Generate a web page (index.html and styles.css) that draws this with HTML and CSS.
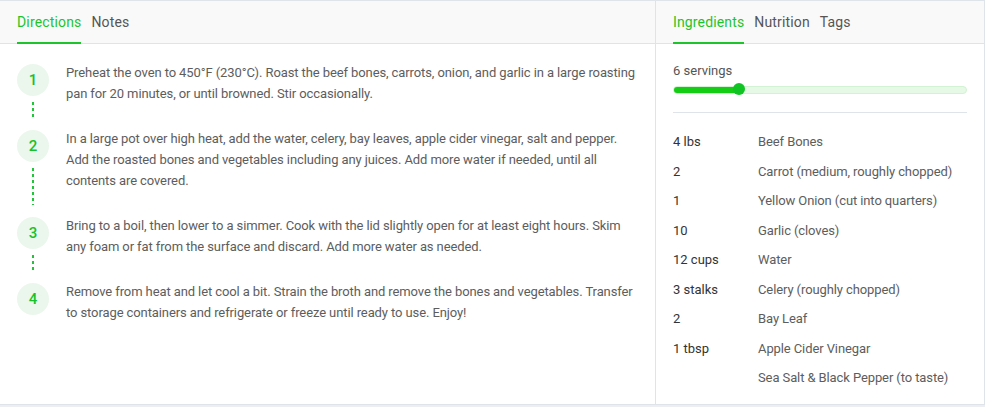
FILE: index.html
```html
<!DOCTYPE html>
<html>
<head>
<meta charset="utf-8">
<link rel="stylesheet" href="styles.css">
</head>
<body>
<div class="card">
  <section class="panel left">
    <nav class="tabs">
      <span class="tab active">Directions</span>
      <span class="tab">Notes</span>
    </nav>
    <div class="steps">
      <div class="step">
        <div class="rail"><span class="num">1</span><span class="dots"></span></div>
        <p class="text">Preheat the oven to 450°F (230°C). Roast the beef bones, carrots, onion, and garlic in a large roasting pan for 20 minutes, or until browned. Stir occasionally.</p>
      </div>
      <div class="step">
        <div class="rail"><span class="num">2</span><span class="dots"></span></div>
        <p class="text">In a large pot over high heat, add the water, celery, bay leaves, apple cider vinegar, salt and pepper. Add the roasted bones and vegetables including any juices. Add more water if needed, until all contents are covered.</p>
      </div>
      <div class="step">
        <div class="rail"><span class="num">3</span><span class="dots"></span></div>
        <p class="text">Bring to a boil, then lower to a simmer. Cook with the lid slightly open for at least eight hours. Skim any foam or fat from the surface and discard. Add more water as needed.</p>
      </div>
      <div class="step last">
        <div class="rail"><span class="num">4</span></div>
        <p class="text">Remove from heat and let cool a bit. Strain the broth and remove the bones and vegetables. Transfer to storage containers and refrigerate or freeze until ready to use. Enjoy!</p>
      </div>
    </div>
  </section>
  <section class="panel right">
    <nav class="tabs">
      <span class="tab active">Ingredients</span>
      <span class="tab">Nutrition</span>
      <span class="tab">Tags</span>
    </nav>
    <div class="ingredients">
      <div class="servings">6 servings</div>
      <div class="slider"><div class="fill" style="width:65px"></div><span class="thumb" style="left:65px"></span></div>
      <div class="divider"></div>
      <ul class="list">
        <li><span class="qty">4 lbs</span><span class="name">Beef Bones</span></li>
        <li><span class="qty">2</span><span class="name">Carrot (medium, roughly chopped)</span></li>
        <li><span class="qty">1</span><span class="name">Yellow Onion (cut into quarters)</span></li>
        <li><span class="qty">10</span><span class="name">Garlic (cloves)</span></li>
        <li><span class="qty">12 cups</span><span class="name">Water</span></li>
        <li><span class="qty">3 stalks</span><span class="name">Celery (roughly chopped)</span></li>
        <li><span class="qty">2</span><span class="name">Bay Leaf</span></li>
        <li><span class="qty">1 tbsp</span><span class="name">Apple Cider Vinegar</span></li>
        <li><span class="qty"></span><span class="name">Sea Salt &amp; Black Pepper (to taste)</span></li>
      </ul>
    </div>
  </section>
</div>
</body>
</html>
```
FILE: styles.css
```css
* { box-sizing: border-box; }
body {
  margin: 0;
  background: #eceef1;
  font-family: Roboto, "Noto Sans", sans-serif;
  -webkit-font-smoothing: antialiased;
}
.card {
  display: flex;
  width: 985px;
  height: 405px;
  background: #fff;
  border-top: 1px solid #dfe4ea;
  border-right: 1px solid #dfe4ea;
  border-bottom: 1px solid #dfe4ea;
}
.panel { display: flex; flex-direction: column; }
.left { width: 656px; border-right: 1px solid #dfe4ea; }
.right { flex: 1; }
.tabs {
  display: flex;
  gap: 10px;
  height: 43px;
  padding: 0 17px;
  background: #f9f9f9;
  border-bottom: 1px solid #dfe4ea;
}
.tab {
  display: flex;
  align-items: center;
  font-size: 14px;
  color: #555;
  border-bottom: 2px solid transparent;
  margin-bottom: -1px;
  padding-top: 1px;
  letter-spacing: 0.15px;
}
.tab.active { color: #1dc42b; border-bottom-color: #1dc42b; }

.steps { padding: 18px 17px 0 17px; }
.step { display: flex; padding-bottom: 24px; }
.step.last { padding-bottom: 0; }
.rail {
  width: 32px;
  display: flex;
  flex-direction: column;
  align-items: center;
  padding-top: 1.5px;
  margin-bottom: -20px;
}
.step.last .rail { margin-bottom: 0; }
.num {
  width: 32px;
  height: 32px;
  border-radius: 50%;
  background: #ebf7ec;
  color: #17c12a;
  font-weight: 500;
  font-size: 15px;
  display: flex;
  align-items: center;
  justify-content: center;
  flex: none;
}
.dots {
  flex: 1;
  width: 2px;
  margin: 6px 0 6px 0;
  background: repeating-linear-gradient(to bottom, #22c53a 0 3px, transparent 3px 6px);
}
.text {
  flex: 1;
  margin: 0 0 0 17px;
  font-size: 13px;
  line-height: 21px;
  color: #5d5d5d;
  letter-spacing: -0.1px;
}

.ingredients { padding: 17px 17px 0 17px; }
.servings { font-size: 13px; color: #555; line-height: 18px; margin-top: 1px; }
.slider {
  position: relative;
  margin-top: 6px;
  height: 8px;
  border-radius: 4px;
  background: #e6f8e6;
  border: 1px solid #d3f2d3;
}
.fill {
  height: 6px;
  border-radius: 3px;
  background: #14cd14;
}
.thumb {
  position: absolute;
  top: -4px;
  width: 12px;
  height: 12px;
  margin-left: -6px;
  border-radius: 50%;
  background: #10c424;
}
.divider { height: 1px; background: #dfe4ea; margin-top: 18px; }
.list { list-style: none; margin: 14px 0 0 0; padding: 0; }
.list li { display: flex; height: 29.5px; align-items: center; font-size: 13px; }
.qty { width: 85px; color: #333; }
.name { color: #5d5d5d; letter-spacing: -0.1px; }
```
